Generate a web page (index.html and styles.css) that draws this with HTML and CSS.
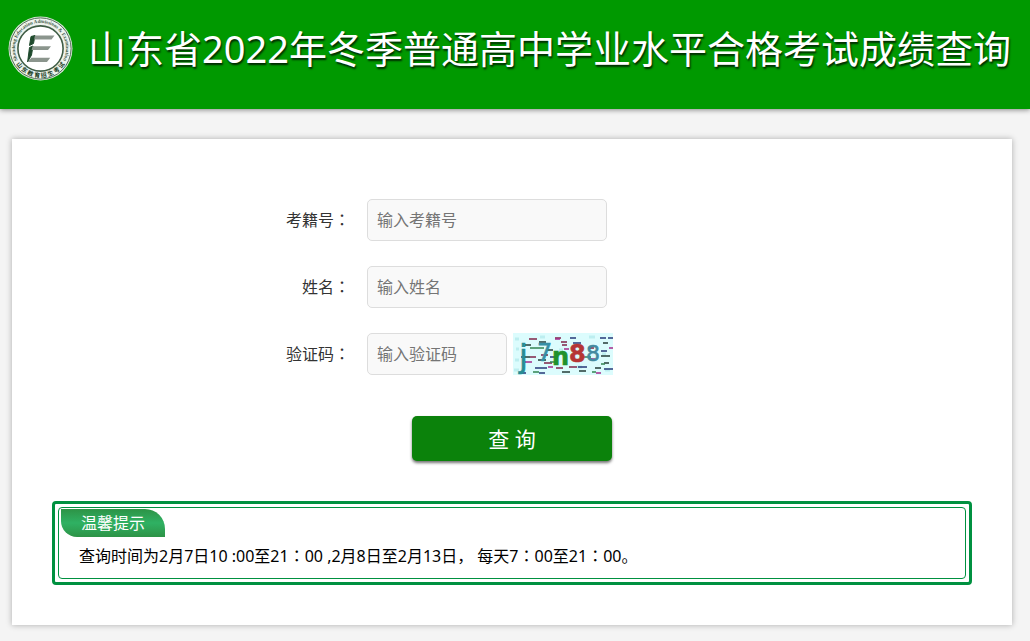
FILE: index.html
```html
<!DOCTYPE html>
<html lang="zh-CN">
<head>
<meta charset="utf-8">
<meta name="viewport" content="width=device-width, initial-scale=1">
<title>山东省2022年冬季普通高中学业水平合格考试成绩查询</title>
<link rel="stylesheet" href="styles.css">
</head>
<body>
<header class="header">
  <svg class="logo" viewBox="0 0 65 65" aria-hidden="true">
    <defs>
      <path id="arc-top" d="M9.6 43.6A25.5 25.5 0 1 1 55.4 43.6"/>
      <path id="arc-bottom" d="M3.6 36.5A29.2 29.2 0 0 0 61.4 36.5"/>
    </defs>
    <circle cx="32.5" cy="32.5" r="32" fill="#d5e6d5"/>
    <circle cx="32.5" cy="32.5" r="30.6" fill="#eef3ee" stroke="#55705a" stroke-width="1"/>
    <circle cx="32.5" cy="32.5" r="22.6" fill="#fff" stroke="#3f5d45" stroke-width="1.6"/>
    <text class="logo-en"><textPath href="#arc-top" startOffset="50%" text-anchor="middle">Shandong Education Admissions &amp; Examination</textPath></text>
    <text class="logo-cn"><textPath href="#arc-bottom" startOffset="50%" text-anchor="middle">山 东 教 育 招 生 考 试</textPath></text>
    <path d="M23 20.5L27 19.5 25.5 27.5 21.5 29.5ZM21.5 31.5L25 30 23.5 39 19.6 46Z" fill="#1f4a2d" stroke="#1f4a2d"/>
    <path d="M27 19.5H46.5L43.5 23.4H26.2ZM24.5 30.2H43L40 34H23.6ZM23.4 41.8H42.2L39 46H19.6Z" fill="#8b958d"/>
  </svg>
  <h1 class="title">山东省2022年冬季普通高中学业水平合格考试成绩查询</h1>
</header>
<main class="card">
  <form class="form">
    <div class="row">
      <label class="label" for="exam-no">考籍号<span class="colon" lang="zh-TW">：</span></label>
      <input class="field" id="exam-no" type="text" placeholder="输入考籍号">
    </div>
    <div class="row">
      <label class="label" for="name">姓名<span class="colon" lang="zh-TW">：</span></label>
      <input class="field" id="name" type="text" placeholder="输入姓名">
    </div>
    <div class="row">
      <label class="label" for="code">验证码<span class="colon" lang="zh-TW">：</span></label>
      <div class="code">
        <input class="field field-short" id="code" type="text" placeholder="输入验证码">
        <svg class="captcha" viewBox="0 0 100 42" role="img" aria-label="验证码图片">
          <rect width="100" height="42" fill="#dcfcfd"/>
          <path d="M2 6h4M3 16h3M2 27h4M1 37h5M27 4h5M46 17h4M76 4h6M89 21h4M64 34h5M92 37h5" stroke="#bdeef0" stroke-width="3"/>
          <g fill="none" stroke-width="1.4">
            <path d="M16 6h8M42 5h6M48 9h6M28 22h7M17 24h6M31 30h8M43 35h7M56 34h8M49 12h5M75 15h6" stroke="#7f2448"/>
            <path d="M57 5h6M87 5h6M95 5h5M88 18h6M22 35h12M65 34h9M8 40h5M91 36h9M26 40h6M60 10h8M37 24h7" stroke="#263978"/>
            <path d="M12 12h6M26 9h7M90 10h5M91 30h5M8 24h9M25 27h8M49 39h8M82 35h6M88 23h9M34 17h6M66 38h7" stroke="#243d39"/>
            <path d="M42 6h5M51 16h5M12 29h7M76 26h6M35 34h5M83 40h5M96 15h4" stroke="#a32b8b"/>
            <path d="M17 15h14M37 29h7M69 24h9M79 39h4M20 39h6M88 31h4" stroke="#328451"/>
          </g>
          <g class="captcha-text">
            <text x="6" y="34" font-size="32" fill="#278c94" stroke="#278c94">j</text>
            <text x="24" y="28" font-size="24" fill="#368fa6" stroke="#368fa6">7</text>
            <text x="39" y="32" font-size="24" fill="#20922c" stroke="#20922c" font-weight="bold">n</text>
            <text x="56" y="29" font-size="24" fill="#b53535" stroke="#b53535" font-weight="bold">8</text>
            <text x="73" y="28" font-size="22" fill="#438aa0" stroke="#438aa0">8</text>
          </g>
        </svg>
      </div>
    </div>
    <button class="submit" type="submit">查 询</button>
  </form>
  <section class="notice">
    <div class="notice-inner">
      <h2 class="notice-tag">温馨提示</h2>
      <p class="notice-text">查询时间为2月7日10 :00至21<span class="colon" lang="zh-TW">：</span>00 ,2月8日至2月13日， 每天7<span class="colon" lang="zh-TW">：</span>00至21<span class="colon" lang="zh-TW">：</span>00。</p>
    </div>
  </section>
</main>
</body>
</html>
```
FILE: styles.css
```css
* {
  box-sizing: border-box;
}

body {
  margin: 0;
  background: #f4f4f4;
  color: #000;
  font: 16px/24px "Noto Sans", "Noto Sans CJK SC", sans-serif;
}

.header {
  display: flex;
  align-items: flex-start;
  gap: 15px;
  padding: 16px 8px 28px;
  background: #090;
  box-shadow: 0 1px 5px rgba(0, 0, 0, 0.45);
}

.logo {
  flex: none;
  width: 65px;
  height: 65px;
}

.logo-en {
  font: bold 5px "Liberation Serif", serif;
  fill: #3c5844;
}

.logo-cn {
  font: bold 6px "Noto Sans CJK SC", sans-serif;
  fill: #173d22;
}

.title {
  margin: 0;
  color: #fff;
  font-size: 38px;
  font-weight: 400;
  line-height: 65px;
  white-space: nowrap;
  text-shadow: 1px 2px 2px rgba(0, 0, 0, 0.75);
}

.card {
  margin: 30px 18px 16px 12px;
  padding: 60px 40px 40px;
  background: #fff;
  box-shadow: 0 0 6px rgba(0, 0, 0, 0.3);
}

.form {
  display: flex;
  flex-direction: column;
  gap: 25px;
}

.row {
  display: grid;
  grid-template-columns: 32.4% 1fr;
  column-gap: 17px;
  align-items: center;
}

.label {
  color: #333;
  text-align: right;
  white-space: nowrap;
}

.colon {
  font-family: "Noto Sans CJK TC", sans-serif;
  line-height: 1;
}

.field {
  width: 240px;
  height: 42px;
  padding: 0 9px;
  border: 1px solid #ddd;
  border-radius: 5px;
  background: #f9f9f9;
  color: #333;
  font: inherit;
}

.field::placeholder {
  color: #757575;
  opacity: 1;
}

.code {
  display: flex;
  align-items: flex-start;
  gap: 6px;
}

.field-short {
  width: 140px;
}

.captcha {
  width: 100px;
  height: 42px;
}

.captcha-text {
  font-family: "DejaVu Sans", sans-serif;
  stroke-width: 0.6;
}

.submit {
  align-self: center;
  width: 200px;
  height: 45px;
  margin-top: 16px;
  padding: 0;
  border: 0;
  border-radius: 5px;
  background: #0b820b;
  box-shadow: 0 2px 3px rgba(0, 0, 0, 0.55);
  color: #fff;
  font: inherit;
  font-size: 21px;
}

.notice {
  margin-top: 40px;
  padding: 3px;
  border: 3px solid #009140;
  border-radius: 4px;
}

.notice-inner {
  padding: 1px 2px 10px;
  border: 1px solid #009140;
  border-radius: 4px;
}

.notice-tag {
  width: 104px;
  margin: 0;
  border-radius: 0 20px 0 16px;
  background: linear-gradient(#2d9346, #2fb163 50%, #2d9346);
  color: #fff;
  font-size: 16px;
  font-weight: 400;
  line-height: 28px;
  text-align: center;
}

.notice-text {
  margin: 7px 18px 0;
}
```
